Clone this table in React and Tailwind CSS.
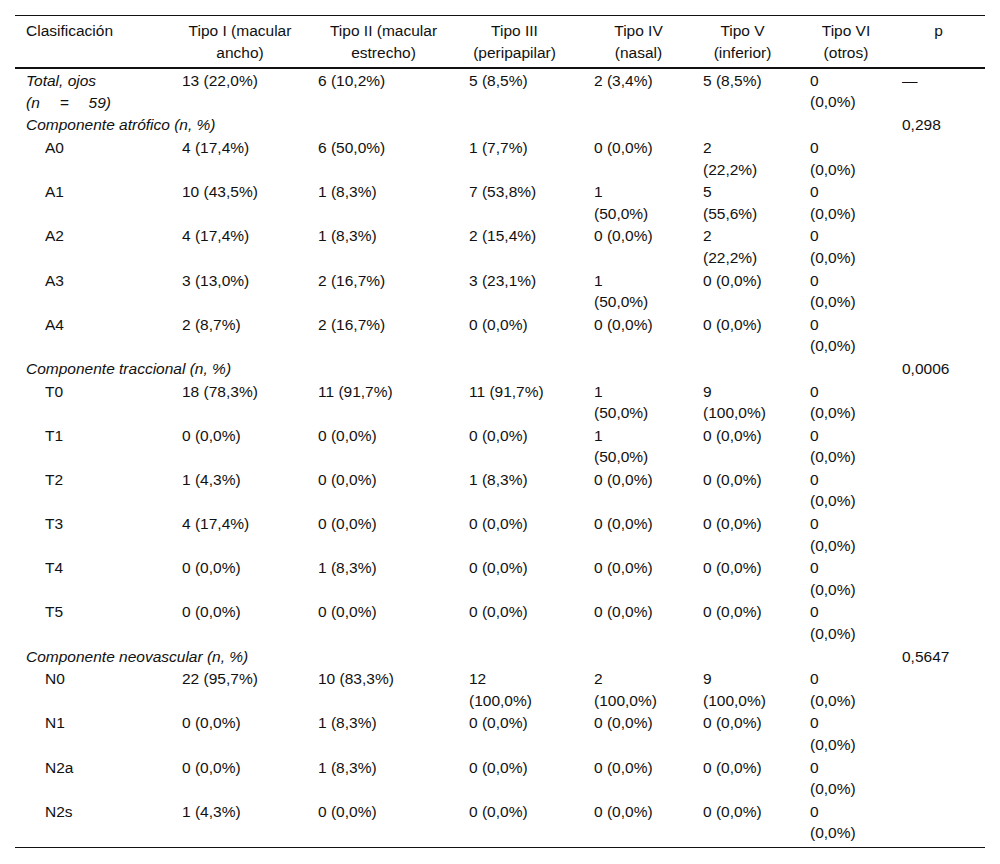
import React from 'react';

const Z = '0 (0,0%)';

const rows = [
  { type: 'total', cells: ['13 (22,0%)', '6 (10,2%)', '5 (8,5%)', '2 (3,4%)', '5 (8,5%)', Z, '—'] },
  { type: 'section', label: 'Componente atrófico (n, %)', p: '0,298' },
  { label: 'A0', cells: ['4 (17,4%)', '6 (50,0%)', '1 (7,7%)', Z, '2 (22,2%)', Z] },
  { label: 'A1', cells: ['10 (43,5%)', '1 (8,3%)', '7 (53,8%)', '1 (50,0%)', '5 (55,6%)', Z] },
  { label: 'A2', cells: ['4 (17,4%)', '1 (8,3%)', '2 (15,4%)', Z, '2 (22,2%)', Z] },
  { label: 'A3', cells: ['3 (13,0%)', '2 (16,7%)', '3 (23,1%)', '1 (50,0%)', Z, Z] },
  { label: 'A4', cells: ['2 (8,7%)', '2 (16,7%)', Z, Z, Z, Z] },
  { type: 'section', label: 'Componente traccional (n, %)', p: '0,0006' },
  { label: 'T0', cells: ['18 (78,3%)', '11 (91,7%)', '11 (91,7%)', '1 (50,0%)', '9 (100,0%)', Z] },
  { label: 'T1', cells: [Z, Z, Z, '1 (50,0%)', Z, Z] },
  { label: 'T2', cells: ['1 (4,3%)', Z, '1 (8,3%)', Z, Z, Z] },
  { label: 'T3', cells: ['4 (17,4%)', Z, Z, Z, Z, Z] },
  { label: 'T4', cells: [Z, '1 (8,3%)', Z, Z, Z, Z] },
  { label: 'T5', cells: [Z, Z, Z, Z, Z, Z] },
  { type: 'section', label: 'Componente neovascular (n, %)', p: '0,5647' },
  { label: 'N0', cells: ['22 (95,7%)', '10 (83,3%)', '12 (100,0%)', '2 (100,0%)', '9 (100,0%)', Z] },
  { label: 'N1', cells: [Z, '1 (8,3%)', Z, Z, Z, Z] },
  { label: 'N2a', cells: [Z, '1 (8,3%)', Z, Z, Z, Z] },
  { label: 'N2s', cells: ['1 (4,3%)', Z, Z, Z, Z, Z] },
];

// content widths of the data columns (Tipo I .. p)
const cellBox = [
  'w-[116px]',
  'w-[131px]',
  'w-[80px]',
  'w-[62px]',
  'w-[62px]',
  'w-[50px]',
  'w-[73px]',
];

const headers = [
  ['Tipo I (macular', 'ancho)', ''],
  ['Tipo II (macular', 'estrecho)', ''],
  ['Tipo III', '(peripapilar)', 'pr-[24px]'],
  ['Tipo IV', '(nasal)', ''],
  ['Tipo V', '(inferior)', 'pr-[18px]'],
  ['Tipo VI', '(otros)', ''],
  ['p', '', ''],
];

function DataCell({ value, i, last }) {
  return (
    <td className={`pl-[10px] pr-0 align-top ${last ? 'pt-[0.5px] pb-[3px]' : 'py-[0.5px]'}`}>
      <div className={cellBox[i]}>{value}</div>
    </td>
  );
}

export default function App() {
  return (
    <div className="min-h-screen bg-white pt-[15px] pl-[15px]">
      <table
        className="table-fixed border-collapse w-[970px] text-[15.5px] leading-[21.6px] text-[#111]"
        style={{ fontFamily: '"Liberation Sans", Arial, sans-serif' }}
      >
        <colgroup>
          <col className="w-[157px]" />
          <col className="w-[136px]" />
          <col className="w-[151px]" />
          <col className="w-[125px]" />
          <col className="w-[109px]" />
          <col className="w-[107px]" />
          <col className="w-[92px]" />
          <col className="w-[93px]" />
        </colgroup>
        <thead>
          <tr className="border-t border-b-2 border-[#111]">
            <th className="pl-[11px] pt-[4px] pb-[4px] text-left font-normal align-top">Clasificación</th>
            {headers.map(([a, b, pad], i) => (
              <th key={i} className={`px-[10px] pt-[4px] pb-[4px] text-center font-normal align-top ${pad}`}>
                {a}
                {b && <br />}
                {b}
              </th>
            ))}
          </tr>
        </thead>
        <tbody>
          {rows.map((r, ri) => {
            const last = ri === rows.length - 1;
            if (r.type === 'section') {
              return (
                <tr key={ri}>
                  <td colSpan={7} className="pl-[11px] py-[0.5px] italic align-top">{r.label}</td>
                  <DataCell value={r.p} i={6} />
                </tr>
              );
            }
            if (r.type === 'total') {
              return (
                <tr key={ri}>
                  <td className="pl-[11px] pt-[1px] pb-[0.5px] italic align-top">
                    <div>Total, ojos</div>
                    <div className="flex w-[85px] justify-between">
                      <span>(n</span>
                      <span>=</span>
                      <span>59)</span>
                    </div>
                  </td>
                  {r.cells.map((c, i) => (
                    <DataCell key={i} value={c} i={i} />
                  ))}
                </tr>
              );
            }
            return (
              <tr key={ri} className={last ? 'border-b border-[#111]' : ''}>
                <td className="pl-[30px] py-[0.5px] align-top">{r.label}</td>
                {r.cells.map((c, i) => (
                  <DataCell key={i} value={c} i={i} last={last} />
                ))}
                <td />
              </tr>
            );
          })}
        </tbody>
      </table>
    </div>
  );
}
